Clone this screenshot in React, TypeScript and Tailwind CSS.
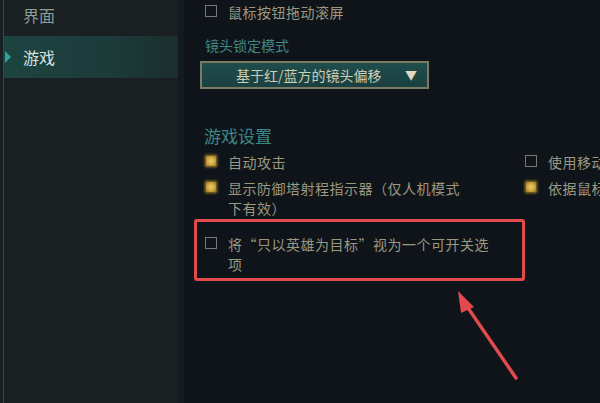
import React from 'react';

const font = { fontFamily: '"Noto Sans CJK SC", "Noto Sans", sans-serif' };

const Box: React.FC<{ checked?: boolean }> = ({ checked }) =>
  checked ? (
    <span className="mt-[3px] h-[12px] w-[12px] shrink-0 rounded-[1px] border border-[#6b5a20] bg-[radial-gradient(circle,#f0d070_0%,#c9a038_60%,#8a6a20_100%)] shadow-[0_0_3px_#b08a30]" />
  ) : (
    <span className="mt-[3px] h-[12px] w-[12px] shrink-0 border border-[#7a7a72]" />
  );

const Option: React.FC<{ checked?: boolean; children: React.ReactNode }> = ({ checked, children }) => (
  <div className="flex items-start gap-[11px] text-[14px] leading-[20px] tracking-[0.5px] text-[#9c9880]">
    <Box checked={checked} />
    <span>{children}</span>
  </div>
);

export default function App() {
  return (
    <div className="relative flex h-[403px] w-[600px] overflow-hidden bg-[#0f141a]" style={font}>
      {/* sidebar */}
      <div className="flex w-[178px] shrink-0 bg-[#1a1f22]">
        <div className="ml-[3px] w-[1px] bg-[#2b4a48]" />
        <div className="flex flex-1 flex-col">
          <div className="-mt-[6px] flex h-[42px] items-center pl-[19px] text-[16px] text-[#8a9e9c]">界面</div>
          <div className="relative flex h-[42px] items-center bg-[linear-gradient(90deg,#1d4441_0%,#1c3b3a_60%,#1a2e2e_100%)] pl-[19px] text-[16px] text-[#d6e4e2]">
            <span className="absolute left-[1px] top-[15px] h-0 w-0 border-y-[6px] border-l-[6px] border-y-transparent border-l-[#2fa59a]" />
            游戏
          </div>
        </div>
      </div>
      <div className="w-[6px] shrink-0 bg-[#141a1f]" />

      {/* main */}
      <div className="flex min-w-0 flex-1 flex-col overflow-hidden pl-[21px]">
        <div className="mt-[2px]">
          <Option>鼠标按钮拖动滚屏</Option>
        </div>
        <div className="mt-[13px] text-[14px] leading-[20px] text-[#3f8784]">镜头锁定模式</div>
        <div className="ml-[-5px] mt-[6px] flex h-[28px] w-[229px] items-center border-2 border-[#7d7a64] bg-[linear-gradient(180deg,#1f4c4c_0%,#1a4040_100%)] pl-[34px] pr-[10px] text-[14px] text-[#cfcdb4]">
          <span className="flex-1">基于红/蓝方的镜头偏移</span>
          <span className="text-[12px] text-[#e0d8c0]">▼</span>
        </div>

        <div className="ml-[-1px] mt-[35px] text-[17px] leading-[24px] text-[#3f8784]">游戏设置</div>
        <div className="mt-[4px] flex">
          <div className="flex w-[320px] shrink-0 flex-col gap-[6px]">
            <Option checked>自动攻击</Option>
            <Option checked>
              显示防御塔射程指示器（仅人机模式
              <br />
              下有效）
            </Option>
          </div>
          <div className="flex flex-col gap-[6px] whitespace-nowrap">
            <Option>使用移动预测</Option>
            <Option checked>依据鼠标位置</Option>
          </div>
        </div>

        <div className="ml-[-11px] mt-[1px] w-[331px] rounded-[3px] border-[3px] border-[#e24a4c] pb-[4px] pl-[8px] pt-[12px]">
          <Option>
            将“只以英雄为目标”视为一个可开关选
            <br />
            项
          </Option>
        </div>
      </div>

      {/* annotation arrow */}
      <svg className="pointer-events-none absolute left-0 top-0" width="600" height="403">
        <line x1="516" y1="378" x2="466" y2="305" stroke="#e24a4c" strokeWidth="3.5" strokeLinecap="round" />
        <polygon points="458,291 474,307 461,313" fill="#e24a4c" />
      </svg>
    </div>
  );
}
